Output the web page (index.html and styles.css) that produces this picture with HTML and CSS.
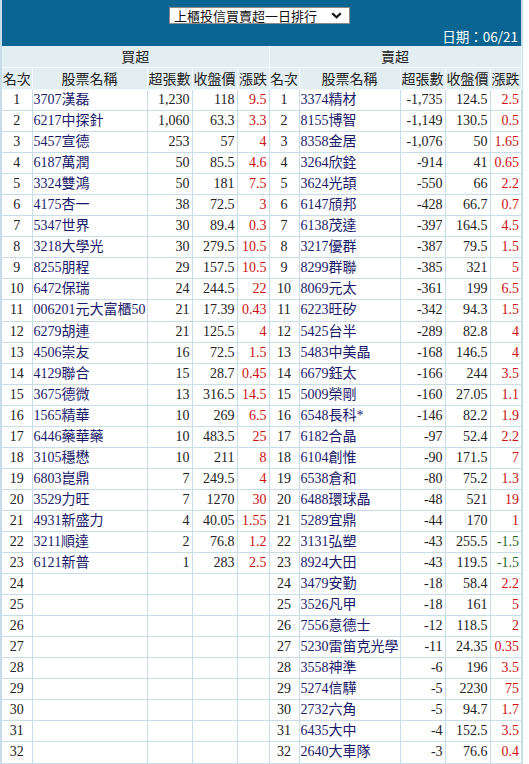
FILE: index.html
```html
<!DOCTYPE html>
<html lang="zh-Hant">
<head>
<meta charset="utf-8">
<title>上櫃投信買賣超一日排行</title>
<link rel="stylesheet" href="styles.css">
</head>
<body>
<div class="page">
  <div class="topbar">
    <div class="select">
      <span class="select-text">上櫃投信買賣超一日排行</span>
      <svg class="chev" width="11" height="7" viewBox="0 0 11 7"><path d="M1.2 1.2 L5.5 5.3 L9.8 1.2" fill="none" stroke="#111" stroke-width="2.2"/></svg>
    </div>
    <div class="date">日期：06/21</div>
  </div>
  <table class="rank">
    <colgroup>
      <col class="c-rk"><col class="c-nm-l"><col class="c-num"><col class="c-num"><col class="c-chg-l">
      <col class="c-rk"><col class="c-nm-r"><col class="c-num"><col class="c-num"><col class="c-chg-r">
    </colgroup>
    <thead>
      <tr class="grp"><th colspan="5">買超</th><th colspan="5">賣超</th></tr>
      <tr class="hdr"><th>名次</th><th>股票名稱</th><th>超張數</th><th>收盤價</th><th>漲跌</th><th>名次</th><th>股票名稱</th><th>超張數</th><th>收盤價</th><th>漲跌</th></tr>
    </thead>
    <tbody id="rows"></tbody>
  </table>
</div>
<script src="app.js"></script>
</body>
</html>
```
FILE: app.js
```js
const buy = [
["3707漢磊","1,230","118","9.5"],
["6217中探針","1,060","63.3","3.3"],
["5457宣德","253","57","4"],
["6187萬潤","50","85.5","4.6"],
["3324雙鴻","50","181","7.5"],
["4175杏一","38","72.5","3"],
["5347世界","30","89.4","0.3"],
["3218大學光","30","279.5","10.5"],
["8255朋程","29","157.5","10.5"],
["6472保瑞","24","244.5","22"],
["006201元大富櫃50","21","17.39","0.43"],
["6279胡連","21","125.5","4"],
["4506崇友","16","72.5","1.5"],
["4129聯合","15","28.7","0.45"],
["3675德微","13","316.5","14.5"],
["1565精華","10","269","6.5"],
["6446藥華藥","10","483.5","25"],
["3105穩懋","10","211","8"],
["6803崑鼎","7","249.5","4"],
["3529力旺","7","1270","30"],
["4931新盛力","4","40.05","1.55"],
["3211順達","2","76.8","1.2"],
["6121新普","1","283","2.5"]
];
const sell = [
["3374精材","-1,735","124.5","2.5"],
["8155博智","-1,149","130.5","0.5"],
["8358金居","-1,076","50","1.65"],
["3264欣銓","-914","41","0.65"],
["3624光頡","-550","66","2.2"],
["6147頎邦","-428","66.7","0.7"],
["6138茂達","-397","164.5","4.5"],
["3217優群","-387","79.5","1.5"],
["8299群聯","-385","321","5"],
["8069元太","-361","199","6.5"],
["6223旺矽","-342","94.3","1.5"],
["5425台半","-289","82.8","4"],
["5483中美晶","-168","146.5","4"],
["6679鈺太","-166","244","3.5"],
["5009榮剛","-160","27.05","1.1"],
["6548長科*","-146","82.2","1.9"],
["6182合晶","-97","52.4","2.2"],
["6104創惟","-90","171.5","7"],
["6538倉和","-80","75.2","1.3"],
["6488環球晶","-48","521","19"],
["5289宜鼎","-44","170","1"],
["3131弘塑","-43","255.5","-1.5"],
["8924大田","-43","119.5","-1.5"],
["3479安勤","-18","58.4","2.2"],
["3526凡甲","-18","161","5"],
["7556意德士","-12","118.5","2"],
["5230雷笛克光學","-11","24.35","0.35"],
["3558神準","-6","196","3.5"],
["5274信驊","-5","2230","75"],
["2732六角","-5","94.7","1.7"],
["6435大中","-4","152.5","3.5"],
["2640大車隊","-3","76.6","0.4"]
];
function cells(rank, r) {
  if (!r) return '<td class="rk">' + rank + '</td><td class="nm"></td><td class="num"></td><td class="num"></td><td class="chg"></td>';
  const cls = r[3].charAt(0) === '-' ? 'chg dn' : 'chg up';
  return '<td class="rk">' + rank + '</td><td class="nm">' + r[0] + '</td><td class="num">' + r[1] + '</td><td class="num">' + r[2] + '</td><td class="' + cls + '">' + r[3] + '</td>';
}
let html = '';
for (let i = 0; i < 32; i++) {
  html += '<tr>' + cells(i + 1, buy[i]) + cells(i + 1, sell[i]) + '</tr>';
}
document.getElementById('rows').innerHTML = html;
```
FILE: styles.css
```css
html, body {
  margin: 0;
  padding: 0;
  background: #ffffff;
}
body {
  font-family: "Liberation Serif", "Noto Sans CJK TC", serif;
  font-size: 14px;
  color: #222;
}
.page {
  width: 519px;
  border-left: 2px solid #c6dce6;
  border-right: 2px solid #c6dce6;
  background: #fff;
}
.topbar {
  height: 46px;
  background: #0a6592;
  display: flex;
  flex-direction: column;
  align-items: center;
}
.select {
  margin-top: 7px;
  width: 179px;
  height: 15px;
  background: #fff;
  border: 1px solid #8a8a8a;
  display: flex;
  align-items: center;
  justify-content: space-between;
  box-sizing: content-box;
  margin-right: 4px;
}
.select-text {
  font-family: "Noto Sans CJK TC", sans-serif;
  font-size: 13px;
  line-height: 15px;
  color: #111;
  padding-left: 4px;
}
.chev {
  margin-right: 7px;
}
.date {
  align-self: stretch;
  text-align: right;
  font-family: "Noto Sans CJK TC", sans-serif;
  font-size: 13.5px;
  line-height: 18px;
  color: #fff;
  padding-right: 3px;
  margin-top: 3px;
}
.rank {
  width: 519px;
  table-layout: fixed;
  border-collapse: collapse;
}
.c-rk { width: 30px; }
.c-nm-l { width: 115px; }
.c-nm-r { width: 101px; }
.c-num { width: 45px; }
.c-chg-l { width: 32px; }
.c-chg-r { width: 31px; }
.rank th {
  background: #e3eef2;
  font-family: "Noto Sans CJK TC", sans-serif;
  font-weight: normal;
  font-size: 14px;
  color: #222;
  border: 1px solid #f4f9fb;
  padding: 0;
  white-space: nowrap;
  overflow: hidden;
}
.rank th:first-child { border-left: 0; }
.rank .grp th { height: 21px; line-height: 21px; border-top: 0; }
.rank .hdr th { height: 21px; line-height: 21px; }
.rank td {
  height: 20.06px;
  padding: 0;
  border: 1px solid #c7dde7;
  white-space: nowrap;
  overflow: hidden;
  line-height: 20px;
}
.rank tr td:first-child { border-left: 0; }
.rank tr td:last-child { border-right: 0; }
.rk { text-align: center; color: #222; }
.nm { text-align: left; padding-left: 1px !important; color: #1a1a6b; }
.num { text-align: right; padding-right: 2px !important; color: #222; }
.chg { text-align: right; padding-right: 2px !important; }
.up { color: #cc1111; }
.dn { color: #1f6b1f; }
```
